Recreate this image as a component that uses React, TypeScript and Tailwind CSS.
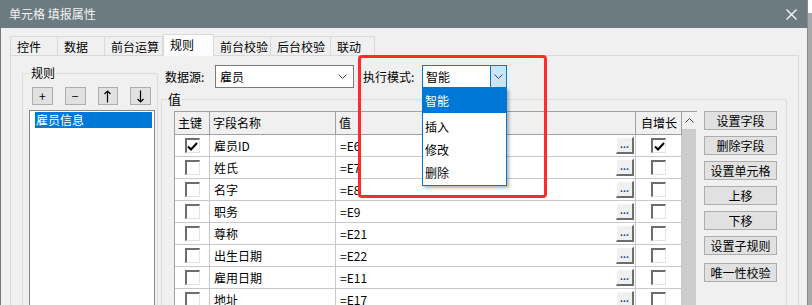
import React from 'react';

const tabs = [
  { label: '控件', w: 'w-[48px]' },
  { label: '数据', w: 'w-[48px]' },
  { label: '前台运算', w: 'w-[59px]' },
  { label: '规则', w: 'w-[51px]', active: true },
  { label: '前台校验', w: 'w-[58px]' },
  { label: '后台校验', w: 'w-[61px]' },
  { label: '联动', w: 'w-[45px]' },
];

const rows = [
  { name: '雇员ID', value: '=E6', key: true, auto: true },
  { name: '姓氏', value: '=E7' },
  { name: '名字', value: '=E8' },
  { name: '职务', value: '=E9' },
  { name: '尊称', value: '=E21' },
  { name: '出生日期', value: '=E22' },
  { name: '雇用日期', value: '=E11' },
  { name: '地址', value: '=E17' },
];

const sideButtons = ['设置字段', '删除字段', '设置单元格', '上移', '下移', '设置子规则'];

function Chevron({ up }: { up?: boolean }) {
  return (
    <svg width="9" height="5" viewBox="0 0 9 5">
      <path d={up ? 'M0.5 4.5L4.5 0.5L8.5 4.5' : 'M0.5 0.5L4.5 4.5L8.5 0.5'} stroke="#444" strokeWidth="1" fill="none" />
    </svg>
  );
}

function Check({ checked }: { checked?: boolean }) {
  return (
    <div className="w-[15px] h-[15px] bg-white border-t-2 border-l-2 border-t-[#6d6d6d] border-l-[#6d6d6d] border-b border-r border-b-[#e3e3e3] border-r-[#e3e3e3] flex items-center justify-center">
      {checked && (
        <svg width="11" height="9" viewBox="0 0 11 9">
          <path d="M1 4.5L4 7.5L10 1" stroke="#000" strokeWidth="2" fill="none" />
        </svg>
      )}
    </div>
  );
}

function Arrow({ down }: { down?: boolean }) {
  return (
    <svg width="7" height="13" viewBox="0 0 7 13">
      {down ? (
        <path d="M3.5 0.5V12M0.5 9L3.5 12L6.5 9" stroke="#000" strokeWidth="1.2" fill="none" />
      ) : (
        <path d="M3.5 12.5V1M0.5 4L3.5 1L6.5 4" stroke="#000" strokeWidth="1.2" fill="none" />
      )}
    </svg>
  );
}

export default function App() {
  return (
    <div className="relative w-[812px] h-[305px] overflow-hidden flex bg-white text-[12px] text-black font-['Noto_Sans_CJK_SC','Microsoft_YaHei',sans-serif]">
      <div className="w-[807px] h-full flex flex-col">
        {/* Title bar */}
        <div className="h-[28px] shrink-0 bg-[#6b7b80] flex items-center justify-between pl-[9px] pr-[10px] text-[#f4f4f4]">
          <span className="leading-none">单元格 填报属性</span>
          <svg width="11" height="11" viewBox="0 0 11 11">
            <path d="M0.5 0.5L10.5 10.5M10.5 0.5L0.5 10.5" stroke="#fff" strokeWidth="1.2" />
          </svg>
        </div>

        <div className="flex-1 min-h-0 overflow-hidden bg-[#f0f0f0] border-l border-[#6b7b80] pl-[9px] pt-[6px] flex flex-col">
          {/* Tabs */}
          <div className="h-[21px] shrink-0 flex items-end relative z-10">
            {tabs.map((t) =>
              t.active ? (
                <div key={t.label} className={`${t.w} h-[22px] -mb-px bg-[#fcfcfc] border border-b-0 border-[#d9d9d9] pl-[6px] leading-[20px]`}>
                  {t.label}
                </div>
              ) : (
                <div key={t.label} className={`${t.w} h-[19px] bg-[#f0f0f0] border border-b-0 border-[#d9d9d9] -ml-px first:ml-0 pl-[6px] leading-[19px]`}>
                  {t.label}
                </div>
              )
            )}
          </div>

          {/* Tab panel */}
          <div className="w-[789px] h-[320px] shrink-0 border border-[#d9d9d9] bg-[#f0f0f0] flex">
            {/* 规则 group */}
            <div className="ml-[11px] mt-[17px] w-[136px] h-[300px] border border-[#dcdcdc] rounded-[2px] relative px-[6px] pt-[13px]">
              <span className="absolute left-[7px] top-[-9px] px-[1px] bg-[#f0f0f0] leading-[16px]">规则</span>
              <div className="flex gap-[12px] ml-[3px]">
                <div className="w-[21px] h-[18px] bg-[#e1e1e1] border border-[#adadad] flex items-center justify-center leading-none">+</div>
                <div className="w-[21px] h-[18px] bg-[#e1e1e1] border border-[#adadad] flex items-center justify-center leading-none">−</div>
                <div className="w-[21px] h-[18px] bg-[#e1e1e1] border border-[#adadad] flex items-center justify-center"><Arrow /></div>
                <div className="w-[21px] h-[18px] bg-[#e1e1e1] border border-[#adadad] flex items-center justify-center"><Arrow down /></div>
              </div>
              <div className="mt-[5px] w-[126px] h-[240px] border border-[#828790] bg-white pt-[1px] pl-[5px] pr-[2px]">
                <div className="h-[16px] bg-[#0078d7] text-white leading-[16px] pl-[1px]">雇员信息</div>
              </div>
            </div>

            {/* Right area */}
            <div className="ml-[3px] mt-[9px] w-[626px] flex flex-col">
              <div className="h-[23px] flex items-center">
                <span className="ml-[4px] w-[50px]">数据源:</span>
                <div className="w-[139px] h-[23px] bg-white border border-[#7a7a7a] flex items-center justify-between pl-[4px] pr-[6px]">
                  <span>雇员</span>
                  <Chevron />
                </div>
                <span className="ml-[9px] w-[59px]">执行模式:</span>
                <div className="w-[85px] h-[23px] bg-white border border-[#0078d7] flex items-center">
                  <span className="flex-1 pl-[3px]">智能</span>
                  <div className="w-[16px] h-full bg-[#cce4f7] border-l border-[#0078d7] flex items-center justify-center">
                    <Chevron />
                  </div>
                </div>
              </div>

              {/* 值 group */}
              <div className="mt-[11px] h-[300px] border border-[#dcdcdc] rounded-[2px] relative pl-[12px] pt-[11px] flex gap-[7px]">
                <span className="absolute left-[5px] top-[-10px] px-[1px] bg-[#f0f0f0] text-[13px] leading-[18px]">值</span>

                <div className="w-[523px] h-[260px] border-l border-t border-[#a0a0a0] flex bg-white">
                  <div className="w-[507px] flex flex-col">
                    <div className="h-[23px] shrink-0 flex bg-[#f0f0f0] border-b border-[#a0a0a0]">
                      <div className="w-[35px] border-r border-[#a0a0a0] pl-[3px] leading-[22px]">主键</div>
                      <div className="w-[126px] border-r border-[#a0a0a0] pl-[3px] leading-[22px]">字段名称</div>
                      <div className="w-[300px] border-r border-[#a0a0a0] pl-[3px] leading-[22px]">值</div>
                      <div className="w-[46px] border-r border-[#a0a0a0] pl-[5px] leading-[22px]">自增长</div>
                    </div>
                    {rows.map((r) => (
                      <div key={r.name} className="h-[22px] shrink-0 flex border-b border-[#c8c8c8]">
                        <div className="w-[35px] border-r border-[#c8c8c8] flex items-center justify-center">
                          <Check checked={r.key} />
                        </div>
                        <div className="w-[126px] border-r border-[#c8c8c8] pl-[4px] leading-[21px]">{r.name}</div>
                        <div className="w-[300px] border-r border-[#c8c8c8] pl-[4px] pr-px flex items-center justify-between">
                          <span className="leading-[21px]">{r.value}</span>
                          <div className="w-[18px] h-[17px] bg-[#f0f0f0] border-t border-l border-white border-b-2 border-r-2 border-b-[#6d6d6d] border-r-[#6d6d6d] flex items-end justify-center pb-[3px] text-[9px] leading-none font-bold text-[#223c88]">
                            ...
                          </div>
                        </div>
                        <div className="w-[46px] border-r border-[#c8c8c8] flex items-center justify-center">
                          <Check checked={r.auto} />
                        </div>
                      </div>
                    ))}
                  </div>
                  <div className="w-[16px] flex flex-col border-r border-[#f0f0f0]">
                    <div className="h-[17px] shrink-0 bg-[#f0f0f0] flex items-center justify-center">
                      <Chevron up />
                    </div>
                    <div className="flex-1 bg-[#cdcdcd]" />
                  </div>
                </div>

                <div className="flex flex-col gap-[6px]">
                  {sideButtons.map((b) => (
                    <div key={b} className="w-[73px] h-[19px] bg-[#e1e1e1] border border-[#adadad] flex items-center justify-center leading-none">
                      {b}
                    </div>
                  ))}
                  <div className="mt-[2px] w-[73px] h-[19px] bg-[#e1e1e1] border border-[#adadad] flex items-center justify-center leading-none">
                    唯一性校验
                  </div>
                </div>
              </div>
            </div>
          </div>
        </div>
      </div>

      {/* window edge */}
      <div className="w-[5px] flex flex-col border-l border-[#7f8b8e]">
        <div className="h-[13px] bg-white" />
        <div className="flex-1 bg-[#a9a9a9]" />
      </div>

      {/* open dropdown list */}
      <div className="absolute left-[422px] top-[88px] w-[85px] h-[98px] bg-white border border-[#0078d7] shadow-[2px_2px_3px_rgba(0,0,0,0.3)] flex flex-col">
        <div className="h-[24px] bg-[#0078d7] text-white pl-[2px] leading-[24px]">智能</div>
        <div className="pt-[2px]">
          <div className="h-[23px] pl-[2px] leading-[23px]">插入</div>
          <div className="h-[23px] pl-[2px] leading-[23px]">修改</div>
          <div className="h-[23px] pl-[2px] leading-[23px]">删除</div>
        </div>
      </div>

      {/* red annotation */}
      <div className="absolute left-[358px] top-[55px] w-[189px] h-[143px] border-[3px] border-[#ff2b2b] rounded-[4px]" />
    </div>
  );
}
